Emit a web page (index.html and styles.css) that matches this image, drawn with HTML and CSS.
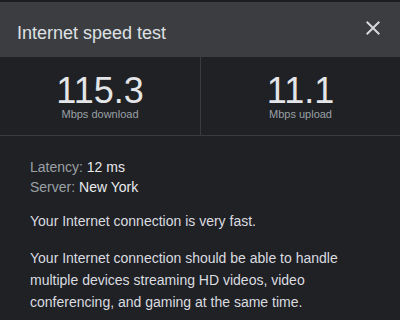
FILE: index.html
```html
<!DOCTYPE html>
<html lang="en">
<head>
<meta charset="utf-8">
<title>Internet speed test</title>
<link rel="stylesheet" href="styles.css">
</head>
<body>
<div class="strip"></div>
<header class="header">
  <h1 class="title">Internet speed test</h1>
  <button class="close" aria-label="Close">
    <svg width="24" height="24" viewBox="0 0 24 24"><path d="M19 6.41L17.59 5 12 10.59 6.41 5 5 6.41 10.59 12 5 17.59 6.41 19 12 13.41 17.59 19 19 17.59 13.41 12z" fill="#d5d7da"/></svg>
  </button>
</header>
<section class="stats">
  <div class="stat">
    <div class="num">115.3</div>
    <div class="unit">Mbps download</div>
  </div>
  <div class="stat stat-right">
    <div class="num">11.1</div>
    <div class="unit">Mbps upload</div>
  </div>
</section>
<section class="details">
  <div class="meta">
    <div><span class="key">Latency:</span> <span class="val">12 ms</span></div>
    <div><span class="key">Server:</span> <span class="val">New York</span></div>
  </div>
  <p class="para p1">Your Internet connection is very fast.</p>
  <p class="para p2">Your Internet connection should be able to handle multiple devices streaming HD videos, video conferencing, and gaming at the same time.</p>
</section>
</body>
</html>
```
FILE: styles.css
```css
html, body {
  margin: 0;
  padding: 0;
  background: #202124;
  font-family: "Liberation Sans", Arial, sans-serif;
  width: 400px;
  height: 320px;
  overflow: hidden;
}
.strip {
  height: 2px;
  background: #1c1d20;
}
.header {
  height: 55px;
  box-sizing: border-box;
  background: #3c3d41;
  display: flex;
  align-items: flex-start;
  justify-content: space-between;
  padding: 14px 15px 0 17px;
}
.title {
  margin: 5px 0 0 0;
  font-size: 18px;
  line-height: 24px;
  font-weight: normal;
  color: #dfe1e4;
}
.close {
  background: none;
  border: 0;
  padding: 0;
  margin: 0;
  width: 24px;
  height: 24px;
  display: block;
}
.close svg { display: block; }
.stats {
  display: grid;
  grid-template-columns: 200px 1fr;
  border-bottom: 1px solid #3a3b3f;
}
.stat {
  text-align: center;
  padding: 17px 0 14px;
}
.stat-right {
  border-left: 1px solid #3a3b3f;
}
.num {
  font-size: 36px;
  line-height: 34px;
  color: #e3e5e8;
}
.unit {
  font-size: 11px;
  line-height: 13px;
  color: #9aa0a6;
}
.details {
  padding: 21px 30px 0 30px;
  font-size: 14px;
  color: #dadce0;
}
.meta {
  line-height: 20px;
}
.key { color: #9aa0a6; }
.val { color: #e8eaed; }
.para {
  margin: 0;
  line-height: 22px;
}
.p1 { margin-top: 13px; }
.p2 { margin-top: 15px; }
```
